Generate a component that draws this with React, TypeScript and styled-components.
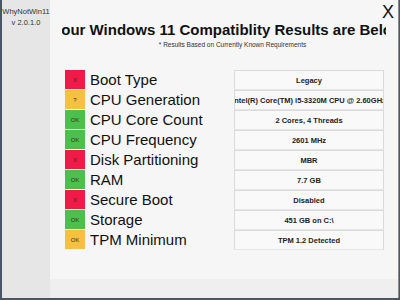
import React from "react";
import styled, { createGlobalStyle } from "styled-components";

const Global = createGlobalStyle`
  html, body { margin: 0; padding: 0; }
  body {
    background: #4a5566;
    width: 400px;
    height: 300px;
    overflow: hidden;
    font-family: "Liberation Sans", Arial, sans-serif;
  }
`;

const Window = styled.div`
  display: flex;
  width: 396px;
  height: 298px;
  margin-left: 2px;
  border-right: 1px solid #8c8c8c;
  background: #f6f6f6;
`;

const Sidebar = styled.div`
  width: 48px;
  flex-shrink: 0;
  background: #e6e6e6;
  display: flex;
  flex-direction: column;
  align-items: center;
  padding-top: 6px;
  box-sizing: border-box;
  overflow: hidden;
  color: #333;
  font-size: 7.5px;
  line-height: 11px;
`;

const Main = styled.div`
  flex: 1;
  min-width: 0;
  display: flex;
  flex-direction: column;
  position: relative;
`;

const Content = styled.div`
  flex: 1;
  min-width: 0;
  display: flex;
  flex-direction: column;
  padding: 0 14px 0 15px;
  background: #f6f6f6;
`;

const Footer = styled.div`
  height: 19px;
  background: #efefef;
`;

const Close = styled.div`
  position: absolute;
  top: 3px;
  right: 4px;
  font-size: 18px;
  line-height: 18px;
  color: #111;
`;

const Title = styled.div`
  margin: 20px -2px 0 -3px;
  overflow: hidden;
  white-space: nowrap;
  display: flex;
  justify-content: center;
  font-size: 15px;
  font-weight: bold;
  line-height: 20px;
  color: #111;

  span {
    flex-shrink: 0;
    margin-left: 8px;
  }
`;

const Subtitle = styled.div`
  margin-top: 0px;
  padding-left: 16px;
  text-align: center;
  font-size: 6.5px;
  line-height: 9px;
  color: #333;
`;

const Rows = styled.div`
  margin-top: 21px;
  display: flex;
  flex-direction: column;
`;

const Row = styled.div`
  display: flex;
  align-items: center;
  height: 20px;
`;

const colors: Record<string, string> = {
  red: "#ef1a47",
  yellow: "#f4c142",
  green: "#4cbf4f",
};

const Badge = styled.div<{ $tone: string }>`
  width: 20px;
  height: 19px;
  margin-bottom: 1px;
  background: ${(p) => colors[p.$tone]};
  display: flex;
  align-items: center;
  justify-content: center;
  font-size: 6px;
  color: #3a2a20;
`;

const Label = styled.div`
  flex: 1;
  margin-left: 5px;
  font-size: 15px;
  line-height: 20px;
  color: #111;
  white-space: nowrap;
`;

const Value = styled.div`
  width: 148px;
  height: 18px;
  box-sizing: content-box;
  border: 1px solid #dadada;
  border-bottom-color: #e6e6e6;
  background: #f9f9f9;
  overflow: hidden;
  white-space: nowrap;
  display: flex;
  justify-content: center;
  align-items: center;
  font-size: 7.5px;
  font-weight: bold;
  color: #222;

  span {
    flex-shrink: 0;
  }
`;

const data = [
  { tone: "red", mark: "X", label: "Boot Type", value: "Legacy" },
  { tone: "yellow", mark: "?", label: "CPU Generation", value: "Intel(R) Core(TM) i5-3320M CPU @ 2.60GHz" },
  { tone: "green", mark: "OK", label: "CPU Core Count", value: "2 Cores, 4 Threads" },
  { tone: "green", mark: "OK", label: "CPU Frequency", value: "2601 MHz" },
  { tone: "red", mark: "X", label: "Disk Partitioning", value: "MBR" },
  { tone: "green", mark: "OK", label: "RAM", value: "7.7 GB" },
  { tone: "red", mark: "X", label: "Secure Boot", value: "Disabled" },
  { tone: "green", mark: "OK", label: "Storage", value: "451 GB on C:\\" },
  { tone: "yellow", mark: "OK", label: "TPM Minimum", value: "TPM 1.2 Detected" },
];

export default function App() {
  return (
    <>
      <Global />
      <Window>
        <Sidebar>
          <div>WhyNotWin11</div>
          <div>v 2.0.1.0</div>
        </Sidebar>
        <Main>
          <Content>
            <Title>
              <span>Your Windows 11 Compatiblity Results are Below</span>
            </Title>
            <Subtitle>* Results Based on Currently Known Requirements</Subtitle>
            <Rows>
              {data.map((d) => (
                <Row key={d.label}>
                  <Badge $tone={d.tone}>{d.mark}</Badge>
                  <Label>{d.label}</Label>
                  <Value>
                    <span>{d.value}</span>
                  </Value>
                </Row>
              ))}
            </Rows>
          </Content>
          <Footer />
          <Close>X</Close>
        </Main>
      </Window>
    </>
  );
}
